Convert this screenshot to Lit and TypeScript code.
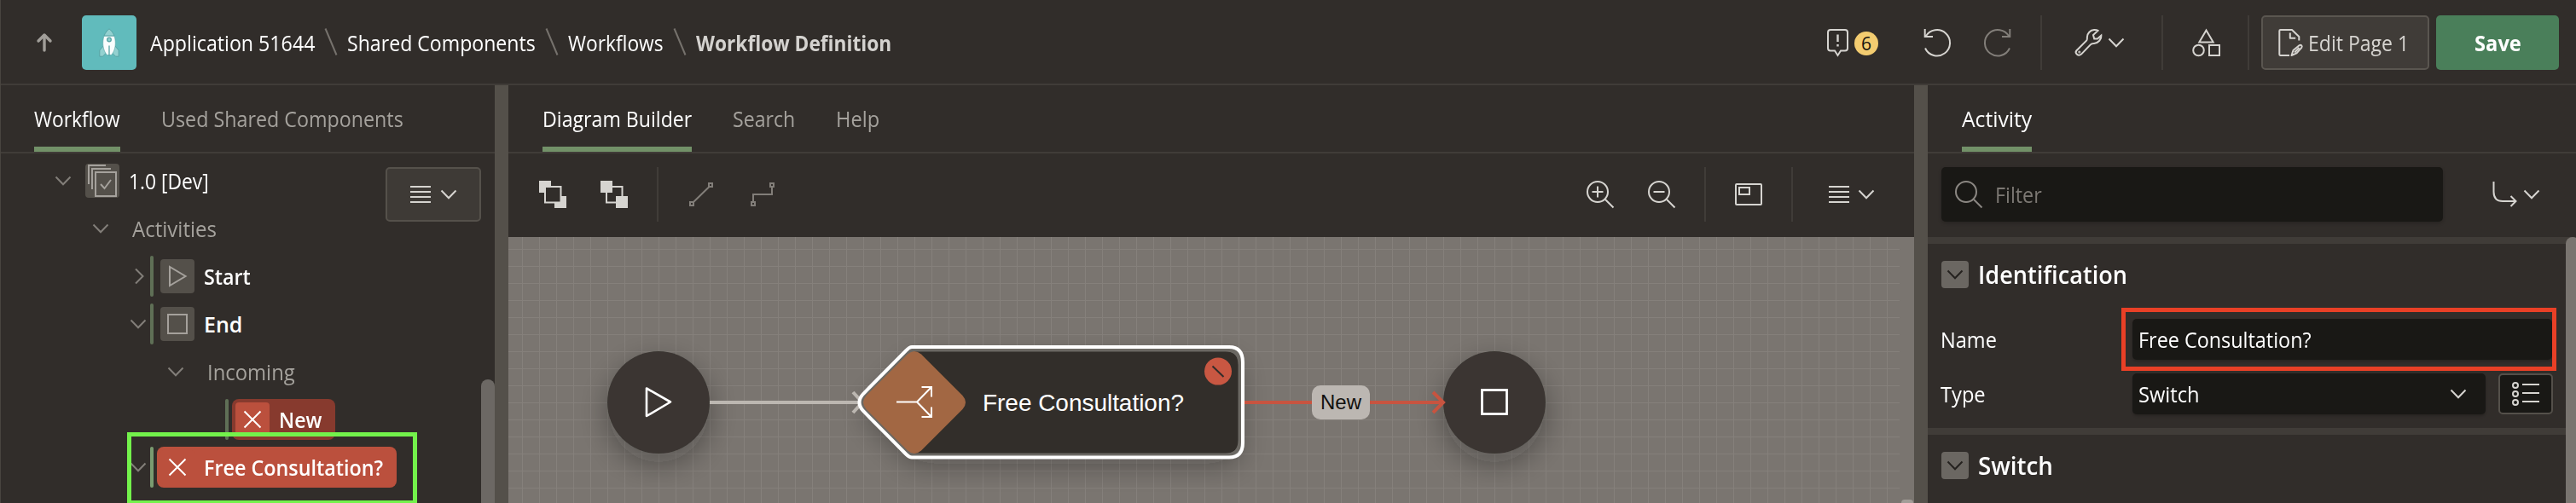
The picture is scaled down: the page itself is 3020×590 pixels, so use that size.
import { LitElement, html, svg, css, nothing, TemplateResult } from "lit";
import { customElement, property, query } from "lit/decorators.js";
import { classMap } from "lit/directives/class-map.js";

/* A single-line label condensed horizontally to a given width. */
@customElement("ui-label")
class UiLabel extends LitElement {
  static styles = css`
    :host { display: inline-block; flex: none; white-space: pre; }
    .t { display: inline-block; transform-origin: 0 50%; }
  `;
  @property({ type: Number }) w = 0;
  @property() text = "";
  @query(".t") t!: HTMLElement;
  firstUpdated() {
    const n = this.t.offsetWidth;
    this.style.width = this.w + "px";
    this.t.style.transform = `scaleX(${this.w / n})`;
  }
  render() { return html`<span class="t">${this.text}</span>`; }
}

const L = (text: string, w: number, cls = "") => html`<ui-label class=${cls} .text=${text} .w=${w}></ui-label>`;

const icon = (w: number, h: number, body: unknown, cls = "") => html`
  <svg class="i ${cls}" width=${w} height=${h} viewBox="0 0 ${w} ${h}">${body}</svg>`;

const chevron = (cls = "") => icon(20, 12, svg`<path d="M1.5 1.5L10 10.2L18.5 1.5"/>`, cls);
const chevronRight = (cls = "") => icon(20, 20, svg`<path d="M7 1.5L15.5 10L7 18.5"/>`, cls);
const slash = () => icon(14, 32, svg`<path d="M.5 0.5L13.500 31.5"/>`, "slash");
const lines = () => icon(24, 20, svg`<path d="M0 1h24M0 7h24M0 13h24M0 19h24"/>`);
const cross = () => icon(22, 22, svg`<path d="M1.5 1.5L20.5 20.5M20.5 1.5L1.5 20.5"/>`, "cross");
const undoPath = svg`<path d="M2 22.5A15.2 15.2 0 1 0 2.7 8.7M1.7 0V9H11"/>`;

interface Node {
  text: string; w: number; depth: number; open?: boolean; leaf?: boolean;
  bar?: boolean; kind: string; icon?: () => TemplateResult;
}

const NODES: Node[] = [
  { text: "1.0 [Dev]", w: 94, depth: 0, kind: "root", open: true,
    icon: () => icon(34, 38, svg`<path d="M1 23V1h20M5 29V5h22M9 9h24v28H9zM15 23l4.5 5L27 18"/>`) },
  { text: "Activities", w: 99, depth: 1, kind: "group", open: true },
  { text: "Start", w: 55, depth: 2, kind: "item", bar: true,
    icon: () => icon(22, 26, svg`<path d="M2 2V24L20.5 13z"/>`) },
  { text: "End", w: 45, depth: 2, kind: "item", open: true, bar: true,
    icon: () => icon(24, 24, svg`<path d="M1 1h22v22H1z"/>`) },
  { text: "Incoming", w: 103, depth: 3, kind: "group", open: true },
  { text: "New", w: 50, depth: 4, kind: "error", leaf: true, bar: true, icon: cross },
  { text: "Free Consultation?", w: 210, depth: 2, kind: "current", open: true, bar: true, icon: cross },
];

@customElement("app-root")
class AppRoot extends LitElement {
  static styles = css`
    :host {
      display: flex; flex-direction: column; position: relative; overflow: hidden;
      width: 3020px; height: 590px; background: #312d2a; color: #fff;
      font: 500 25px/34px "Open Sans", "Noto Sans", sans-serif;
    }
    :host::before { content: ""; position: absolute; left: 0; top: 0; width: 1px; height: 100%; background: #48443f; z-index: 5; }
    * { box-sizing: border-box; }
    .i { display: block; flex: none; fill: none; stroke: #d6d4d0; stroke-width: 2; overflow: visible; }
    .dim { stroke: #827e79; }
    .sep { flex: none; width: 2px; height: 64px; background: #403c38; }

    header { display: flex; align-items: center; flex: none; height: 100px; border-bottom: 2px solid #403c38; padding: 2px 20px 0 43px; }
    .up { stroke: #a19e99; stroke-width: 3.4; stroke-linecap: round; stroke-linejoin: round; }
    .tile { flex: none; width: 64px; height: 64px; margin: 0 16px 0 35px; border-radius: 5px; background: #61bbbc; display: grid; place-items: center; }
    .rocket { stroke: #55a3a4; stroke-width: 1; }
    .crumbs { display: flex; align-items: center; gap: 12px; }
    .slash { stroke: #76726d; position: relative; top: -1px; }
    .here { font-weight: 700; color: #d4d2cf; }
    .actions { display: flex; align-items: center; margin-left: auto; }
    .badge { width: 28px; height: 28px; margin-left: 7px; border-radius: 50%; background: #f3cc70; color: #15130f; font: 500 21px/28px "Open Sans", sans-serif; text-align: center; position: relative; top: 1px; }
    .undo { margin-left: 53px; }
    .redo { margin: 0 34px 0 39px; }
    .wrench { margin: 0 6px 0 39px; }
    .more { margin-right: 43px; }
    .shapes { margin: 0 33px 0 34px; }
    .edit { display: flex; align-items: center; width: 197px; height: 64px; margin-left: 14px; padding-left: 19px; gap: 6px; border: 2px solid #5a5650; border-radius: 5px; background: #403c38; color: #d6d4d0; }
    .save { display: grid; place-items: center; width: 144px; height: 64px; margin-left: 8px; border-radius: 5px; background: #4a7f5a; font-weight: 700; }

    main { display: flex; flex: 1; min-height: 0; }
    .split { flex: none; width: 16px; background: #54504a; }
    .pane { position: relative; display: flex; flex-direction: column; flex: none; overflow: hidden; }
    .left { width: 580px; }
    .center { width: 1648px; }
    .right { width: 760px; }
    .tabs { display: flex; flex: none; height: 80px; border-bottom: 2px solid #403c38; padding-left: 40px; gap: 48px; color: #a5a29d; }
    .tab { display: flex; align-items: center; height: 78px; border-bottom: 6px solid transparent; padding-top: 6px; }
    .tab.on { border-color: #729168; color: #fff; }

    .tree { padding-top: 4px; }
    .row { display: flex; align-items: center; height: 56px; }
    .d0 { padding-left: 64px; } .d1 { padding-left: 108px; } .d2 { padding-left: 152px; } .d3 { padding-left: 196px; } .d4 { padding-left: 240px; }
    .slot { display: grid; place-items: center; flex: none; width: 20px; height: 20px; }
    .bar { flex: none; width: 4px; height: 48px; margin: 0 4px; border-radius: 2px; }
    .bar.on { background: #5f6f56; }
    .body { display: flex; align-items: center; height: 48px; padding: 0 16px 0 4px; border-radius: 8px; }
    .ic { display: grid; place-items: center; width: 40px; height: 40px; border-radius: 4px; background: #54504a; }
    .ic .i { stroke: #a5a19c; }
    .ic .cross { stroke: #fff; }
    .txt { margin-left: 11px; }
    .group .txt { color: #a5a29d; }
    .item .txt, .error .txt, .current .txt { font-weight: 600; }
    .error .body { background: #873a2e; }
    .error .ic, .current .ic { background: #bb503d; }
    .current .body { background: #bb503d; }
    .current .bar { background: #7a9b70; }
    .menu { position: absolute; left: 452px; top: 96px; display: flex; align-items: center; justify-content: center; gap: 11px; width: 112px; height: 64px; border: 2px solid #55514b; border-radius: 5px; background: #3e3a36; }
    .mark { position: absolute; border: 5px solid #73f24b; border-bottom-width: 3px; left: 149px; top: 407px; width: 340px; height: 83px; }
    .thumb { position: absolute; width: 16px; border-radius: 8px 8px 0 0; background: #6c6864; }
    .tl { left: 564px; top: 345px; height: 145px; }
    .tc { left: 1633px; top: 486px; height: 4px; background: #a29d98; width: 14px; border-radius: 7px 7px 0 0; }
    .tr { left: 748px; top: 178px; height: 312px; background: #7a7570; }

    .tools { display: flex; align-items: center; flex: none; height: 98px; padding: 0 46px 2px 36px; }
    .front { margin-right: 40px; }
    .tools .s1 { margin: 0 36px 0 34px; }
    .elbow { margin-left: 44px; }
    .zin { margin: 0 40px 0 auto; }
    .tools .s2 { margin: 0 34px; }
    .tools .s3 { margin: 0 42px 0 34px; }
    .tools .chev { margin-left: 10px; }
    .canvas { display: block; flex: none; width: 1648px; height: 312px; }

    .find { display: flex; align-items: center; height: 98px; flex: none; padding: 0 42px 2px 16px; }
    .filter { display: flex; align-items: center; gap: 15px; width: 588px; height: 64px; padding: 0 16px; border-radius: 5px; background: #191815; color: #7c7873; box-shadow: 0 2px 4px #0003; }
    .filter .i { stroke: #8b8782; }
    .goto { margin: 0 8px 0 auto; }
    .band { flex: none; height: 8px; background: #403c38; }
    .sec { display: flex; align-items: center; flex: none; height: 72px; padding: 0 0 0 16px; gap: 11px; font: 600 29px/40px "Open Sans", sans-serif; }
    .tog { display: grid; place-items: center; width: 32px; height: 32px; border-radius: 4px; background: #6b6762; }
    .tog .i { stroke: #24211e; }
    .field { display: flex; align-items: center; flex: none; height: 48px; padding-left: 15px; margin-top: 16px; }
    .cap { width: 225px; }
    .in { display: flex; align-items: center; justify-content: space-between; height: 48px; width: 492px; padding: 0 22px 0 7px; border-radius: 5px; background: #191815; box-shadow: 0 2px 3px #0003; }
    .in.sel { width: 414px; }
    .lov { display: grid; place-items: center; width: 64px; height: 48px; margin-left: 15px; border: 2px solid #54504a; border-radius: 5px; background: #191815; }
    .red { position: absolute; left: 227px; top: 261px; width: 510px; height: 74px; border: 5px solid #e94026; }
    .band.low { margin-top: 16px; }
    .ct { font-family: "Liberation Sans", Arial, sans-serif; }
  `;

  private row(n: Node) {
    const cls = classMap({ row: true, [`d${n.depth}`]: true, [n.kind]: true });
    return html`<div class=${cls}>
      <div class="slot">${n.leaf ? nothing : n.open ? chevron("dim") : chevronRight("dim")}</div>
      <div class="bar ${n.bar ? "on" : ""}"></div>
      <div class="body">
        ${n.icon ? html`<div class="ic">${n.icon()}</div>` : nothing}
        ${L(n.text, n.w, "txt")}
      </div>
    </div>`;
  }

  private header() {
    return html`<header>
      ${icon(18, 22, svg`<path d="M9 20V2M2 9L9 2L16 9"/>`, "up")}
      <div class="tile">${icon(24, 34, svg`
        <path d="M5.5 20.5L.8 26V33.2H4.500L9 28.500zM18.5 20.5L23.200 26V33.200H19.500L15 28.500z" fill="#93d1d0"/>
        <path d="M6 9H18C20.5 17 19.5 26 14.5 31.500H9.5C4.5 26 3.5 17 6 9z" fill="#fafdfd" stroke-width=".6"/>
        <path d="M6 9C7.5 5 10 2.5 12 .8C14 2.5 16.5 5 18 9z" fill="#93d1d0"/>
        <circle cx="12" cy="13.5" r="2.3" fill="#93d1d0" stroke-width="1.3"/>
        <path d="M12 20.5V32.500" stroke-width="1.3"/>`, "rocket")}</div>
      <div class="crumbs">
        ${L("Application 51644", 193)}${slash()}${L("Shared Components", 221)}${slash()}${L("Workflows", 112)}${slash()}${L("Workflow Definition", 229, "here")}
      </div>
      <div class="actions">
        ${icon(25, 32, svg`<path d="M4 1H21a3 3 0 0 1 3 3V22.5a3 3 0 0 1-3 3H16L12.5 31L9 25.5H4a3 3 0 0 1-3-3V4a3 3 0 0 1 3-3z"/><path d="M12.5 6.5V15M12.5 18V20.5" stroke-width="2.4"/>`)}
        <div class="badge">6</div>
        ${icon(32, 32, undoPath, "undo")}
        ${icon(32, 32, svg`<g transform="matrix(-1 0 0 1 32 0)">${undoPath}</g>`, "redo dim")}
        <div class="sep"></div>
        ${icon(32, 32, svg`<path d="M1.5 25.2L13.3 13.4C14 12.5 14 11.5 13.9 9.5C14 5 17.5 1.3 22 1.1C24 1 25.5 1.3 26.5 1.9L21 7L22.2 11.4L26 11.4L30.4 7.5C30.9 12 27 16.6 22 16.9C20 17 19 17 17.8 18.4L7 29.6C3.5 32.5-1.2 28.5 1.5 25.2z"/><circle cx="4.8" cy="27" r=".5"/>`, "wrench")}
        ${chevron("more")}
        <div class="sep"></div>
        ${icon(32, 32, svg`<path d="M16.5 1.5L24.7 15.5H8.3zM20 19h12v12H20z"/><circle cx="7.5" cy="25" r="6.3"/>`, "shapes")}
        <div class="sep"></div>
        <div class="edit">
          ${icon(28, 32, svg`<path d="M12 31H1.500Q.3 31 .3 29.800V2.200Q.3 1 1.500 1H15L23.300 9V13.500M12.800 4.500V10.700H19.200M14.500 31L16.500 25L23.500 19.300C25.500 18 27.600 19.600 26.300 21.800L20.500 28.300zM18 27.500L23.500 22" stroke-linejoin="round"/>`)}
          ${L("Edit Page 1", 118)}
        </div>
        <div class="save">${L("Save", 55)}</div>
      </div>
    </header>`;
  }

  private diagram() {
    return html`<svg class="canvas" viewBox="596 278 1648 312">
      <defs>
        <pattern id="grid" x="612" y="292" width="20" height="20" patternUnits="userSpaceOnUse">
          <path d="M0 .5H20M.5 0V20" stroke="#85807b" fill="none"/>
        </pattern>
        <filter id="sh" x="-50%" y="-50%" width="200%" height="200%">
          <feDropShadow dx="0" dy="12" stdDeviation="17" flood-color="#1a1512" flood-opacity=".36"/>
        </filter>
      </defs>
      <rect x="596" y="278" width="1648" height="312" fill="#7a7570"/>
      <rect x="596" y="278" width="1631" height="312" fill="url(#grid)"/>
      <circle cx="772" cy="472" r="60" fill="#3a3632" filter="url(#sh)"/>
      <path d="M758 455.5V488L786 471.5z" fill="none" stroke="#fff" stroke-width="2.6" stroke-linejoin="round"/>
      <circle cx="1752" cy="472" r="60" fill="#3a3632" filter="url(#sh)"/>
      <rect x="1737.5" y="457.5" width="29" height="28" fill="none" stroke="#fff" stroke-width="2.8"/>
      <path d="M1072 412H1436Q1452 412 1452 428V516Q1452 532 1436 532H1072L1012 472z" fill="#312d2a" filter="url(#sh)"/>
      <path d="M832 472H1010M1000 460L1011 472L1000 484" fill="none" stroke="#bcb7b1" stroke-width="4"/>
      <path d="M1452 472H1692M1680 460L1692 472L1680 484" fill="none" stroke="#c75440" stroke-width="4"/>
      <path d="M1072 410H1438Q1454 410 1454 428V516Q1454 534 1438 534H1072Q1066 534 1062 528L1013 480Q1007 472 1013 464L1062 416Q1066 410 1072 410z" fill="none" stroke="#6b6863" stroke-width="5"/>
      <path d="M1069 407H1441Q1457 407 1457 425V519Q1457 536.5 1441 536.5H1069Q1066 536.5 1062.5 533L1012 482Q1003 472 1012 462L1062.5 411Q1066 407 1069 407z" fill="none" stroke="#fff" stroke-width="4"/>
      <path d="M1064 415.5Q1072 408.5 1080 415.5L1128.5 464Q1135.5 472 1128.5 480L1080 528.5Q1072 535.5 1064 528.5L1015.5 480Q1008.5 472 1015.5 464z" fill="#a26743"/>
      <path d="M1051 471.5H1075L1092 454M1075 471.5L1092 489M1080.5 454H1092V465.5M1080.5 489H1092V477.5" fill="none" stroke="#fff" stroke-width="2"/>
      <circle cx="1428" cy="435.6" r="16" fill="#c85742"/>
      <path d="M1421.5 429.5L1434.5 442" stroke="#312d2a" stroke-width="2"/>
      <text class="ct" x="1152" y="482" font-size="28" fill="#fff" textLength="236">Free Consultation?</text>
      <rect x="1538" y="452" width="68" height="40" rx="10" fill="#bcb7b2"/>
      <text class="ct" x="1548" y="480" font-size="24" fill="#12110f" textLength="48">New</text>
    </svg>`;
  }

  render() {
    return html`
      ${this.header()}
      <main>
        <section class="pane left">
          <div class="tabs">
            <div class="tab on">${L("Workflow", 101)}</div>
            <div class="tab">${L("Used Shared Components", 284)}</div>
          </div>
          <div class="tree">${NODES.map((n) => this.row(n))}</div>
          <div class="menu">${lines()}${chevron()}</div>
          <div class="thumb tl"></div>
          <div class="mark"></div>
        </section>
        <div class="split"></div>
        <section class="pane center">
          <div class="tabs">
            <div class="tab on">${L("Diagram Builder", 175)}</div>
            <div class="tab">${L("Search", 73)}</div>
            <div class="tab">${L("Help", 51)}</div>
          </div>
          <div class="tools">
            ${icon(32, 32, svg`<path d="M0 0H14V7H7V14H0zM32 32H18V25H25V18H32z" fill="#d6d4d0" stroke="none"/><path d="M7 7H25.5V25.5H7z"/>`, "front")}
            ${icon(32, 32, svg`<path d="M14 7H25.5V18M18 25.5H7V14"/><path d="M0 0H14V14H0zM18 18H32V32H18z" fill="#d6d4d0" stroke="none"/>`)}
            <div class="sep s1"></div>
            ${icon(28, 28, svg`<path d="M1 23h4v4h-4zM23 1h4v4h-4zM5 23L23.5 5"/>`, "dim")}
            ${icon(28, 28, svg`<path d="M1 23h4v4h-4zM23 1h4v4h-4zM3 23V14H25V5"/>`, "dim elbow")}
            ${icon(32, 32, svg`<circle cx="13" cy="13" r="12"/><path d="M6.5 13h13M13 6.5v13M22 22L31.5 31.5"/>`, "zin")}
            ${icon(32, 32, svg`<circle cx="13" cy="13" r="12"/><path d="M6.5 13h13M22 22L31.5 31.5"/>`)}
            <div class="sep s2"></div>
            ${icon(32, 26, svg`<rect x="1" y="1" width="30" height="24" rx="1"/><path d="M5 5h12v8H5z"/>`)}
            <div class="sep s3"></div>
            ${lines()}${chevron("chev")}
          </div>
          ${this.diagram()}
          <div class="thumb tc"></div>
        </section>
        <div class="split"></div>
        <section class="pane right">
          <div class="tabs"><div class="tab on">${L("Activity", 82)}</div></div>
          <div class="find">
            <div class="filter">
              ${icon(32, 32, svg`<circle cx="13" cy="13" r="12"/><path d="M22 22L31.5 31.5"/>`)}
              ${L("Filter", 55)}
            </div>
            ${icon(28, 30, svg`<path d="M1.5 0V12Q1.5 23 12 23H27M21.5 17L27.5 23L21.5 29"/>`, "goto")}
            ${chevron()}
          </div>
          <div class="band"></div>
          <div class="sec"><div class="tog">${chevron()}</div>${L("Identification", 175)}</div>
          <div class="field"><div class="cap">${L("Name", 66)}</div><div class="in">${L("Free Consultation?", 203)}</div></div>
          <div class="field"><div class="cap">${L("Type", 53)}</div>
            <div class="in sel">${L("Switch", 72)}${chevron()}</div>
            <div class="lov">${icon(32, 28, svg`<circle cx="4" cy="4" r="3"/><circle cx="4" cy="14" r="3"/><circle cx="4" cy="24" r="3"/><path d="M12 3H32M12 13H32M12 23H32"/>`)}</div>
          </div>
          <div class="band low"></div>
          <div class="sec"><div class="tog">${chevron()}</div>${L("Switch", 88)}</div>
          <div class="thumb tr"></div>
          <div class="red"></div>
        </section>
      </main>`;
  }
}
